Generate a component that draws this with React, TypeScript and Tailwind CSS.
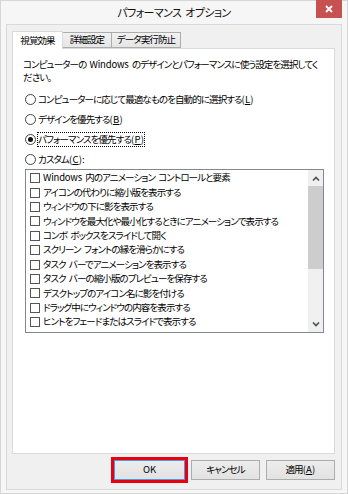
import React from "react";
import clsx from "clsx";

const items = [
  "Windows 内のアニメーション コントロールと要素",
  "アイコンの代わりに縮小版を表示する",
  "ウィンドウの下に影を表示する",
  "ウィンドウを最大化や最小化するときにアニメーションで表示する",
  "コンボ ボックスをスライドして開く",
  "スクリーン フォントの縁を滑らかにする",
  "タスク バーでアニメーションを表示する",
  "タスク バーの縮小版のプレビューを保存する",
  "デスクトップのアイコン名に影を付ける",
  "ドラッグ中にウィンドウの内容を表示する",
  "ヒントをフェードまたはスライドで表示する",
];

function Key({ k }: { k: string }) {
  return (
    <span className="tracking-[0.2px]">
      (<span className="underline underline-offset-[1px]">{k}</span>)
    </span>
  );
}

function Latin({ children }: { children: React.ReactNode }) {
  return <span className="tracking-[-0.2px]">{children}</span>;
}

function Radio({
  checked,
  focused,
  children,
}: {
  checked?: boolean;
  focused?: boolean;
  children: React.ReactNode;
}) {
  return (
    <div className="flex h-[20px] items-center">
      <span className="flex h-[11px] w-[11px] shrink-0 items-center justify-center rounded-full border border-[#444] bg-white">
        {checked && <span className="h-[5px] w-[5px] rounded-full bg-[#111]" />}
      </span>
      <span
        className={clsx(
          "ml-[2px] leading-[13px] whitespace-nowrap",
          focused && "outline-1 outline-dotted outline-[#000]"
        )}
      >
        {children}
      </span>
    </div>
  );
}

function Chevron({ up }: { up?: boolean }) {
  return (
    <svg width="8" height="5" viewBox="0 0 8 5">
      <polyline
        points={up ? "1,4.5 4,1.5 7,4.5" : "1,0.5 4,3.5 7,0.5"}
        fill="none"
        stroke="#505050"
        strokeWidth="1.6"
      />
    </svg>
  );
}

function ItemText({ text }: { text: string }) {
  if (text.startsWith("Windows")) {
    return (
      <>
        <Latin>Windows</Latin>
        {text.slice(7)}
      </>
    );
  }
  return <>{text}</>;
}

export default function App() {
  return (
    <div className="flex h-[494px] w-[348px] flex-col border border-[#d6d6d6] bg-[#f6f6f6] font-['Noto_Sans_CJK_JP',sans-serif] text-[9.5px] tracking-[-0.9px] text-black [font-feature-settings:'palt'] [word-spacing:2px]">
      {/* title bar */}
      <div className="relative flex h-[23px] shrink-0 items-center justify-center">
        <span className="text-[11px] leading-none tracking-[-0.6px] text-[#111]">パフォーマンス オプション</span>
        <button
          type="button"
          className="absolute right-[5px] top-[-1px] flex h-[18px] w-[26px] items-center justify-center bg-[#c75050]"
        >
          <svg width="8" height="8" viewBox="0 0 8 8">
            <path d="M1 1 L7 7 M7 1 L1 7" stroke="#fff" strokeWidth="1.8" />
          </svg>
        </button>
      </div>

      {/* client */}
      <div className="mx-[5px] mb-[3px] flex flex-1 flex-col border border-[#d9d9d9] bg-[#f0f0f0] pl-[5px] pr-[6px] pt-[6px]">
        {/* tabs */}
        <div className="flex items-end">
          <div className="relative z-10 -mb-px flex h-[18px] w-[51px] items-center justify-center border border-b-0 border-[#d9d9d9] bg-white leading-none">
            視覚効果
          </div>
          <div className="flex h-[16px] w-[49px] items-center justify-center border border-l-0 border-[#acacac] bg-gradient-to-b from-[#f2f2f2] to-[#e5e5e5] leading-none">
            詳細設定
          </div>
          <div className="flex h-[16px] w-[69px] items-center justify-center border border-l-0 border-[#acacac] bg-gradient-to-b from-[#f2f2f2] to-[#e5e5e5] leading-none">
            データ実行防止
          </div>
        </div>

        {/* panel */}
        <div className="flex h-[406px] flex-col border border-[#d9d9d9] bg-white pl-[10px] pt-[9px]">
          <p className="whitespace-nowrap leading-[13px]">
            コンピューターの <Latin>Windows</Latin> のデザインとパフォーマンスに使う設定を選択してく
            <br />
            ださい。
          </p>

          <div className="ml-[2px] mt-[5px] flex flex-col">
            <Radio>
              コンピューターに応じて最適なものを自動的に選択する<Key k="L" />
            </Radio>
            <Radio>
              デザインを優先する<Key k="B" />
            </Radio>
            <Radio checked focused>
              パフォーマンスを優先する<Key k="P" />
            </Radio>
            <Radio>
              カスタム<Key k="C" />:
            </Radio>
          </div>

          <div className="ml-[2px] flex h-[164px] w-[299px] border border-[#828790] bg-white">
            <div className="flex flex-1 flex-col pl-[4px] pt-[1px]">
              {items.map((t) => (
                <div key={t} className="flex h-[14.4px] items-center">
                  <span className="h-[10px] w-[10px] shrink-0 border border-[#555] bg-white" />
                  <span className="ml-[3px] whitespace-nowrap leading-none">
                    <ItemText text={t} />
                  </span>
                </div>
              ))}
            </div>
            <div className="flex w-[15px] flex-col bg-[#f0f0f0]">
              <div className="flex h-[16px] items-center justify-center">
                <Chevron up />
              </div>
              <div className="h-[83px] bg-[#cdcdcd]" />
              <div className="flex-1" />
              <div className="flex h-[16px] items-center justify-center">
                <Chevron />
              </div>
            </div>
          </div>
        </div>

        {/* buttons */}
        <div className="mt-[6px] flex justify-end gap-[6px]">
          <button
            type="button"
            className="h-[20px] w-[71px] border border-[#4a9be0] bg-gradient-to-b from-[#ececec] to-[#e2e2e2] leading-none tracking-normal outline-3 outline-solid outline-[#e60012]"
          >
            OK
          </button>
          <button
            type="button"
            className="h-[20px] w-[69px] border border-[#adadad] bg-gradient-to-b from-[#ececec] to-[#e2e2e2] leading-none"
          >
            キャンセル
          </button>
          <button
            type="button"
            className="h-[20px] w-[69px] border border-[#adadad] bg-gradient-to-b from-[#ececec] to-[#e2e2e2] leading-none"
          >
            適用<Key k="A" />
          </button>
        </div>
      </div>
    </div>
  );
}
